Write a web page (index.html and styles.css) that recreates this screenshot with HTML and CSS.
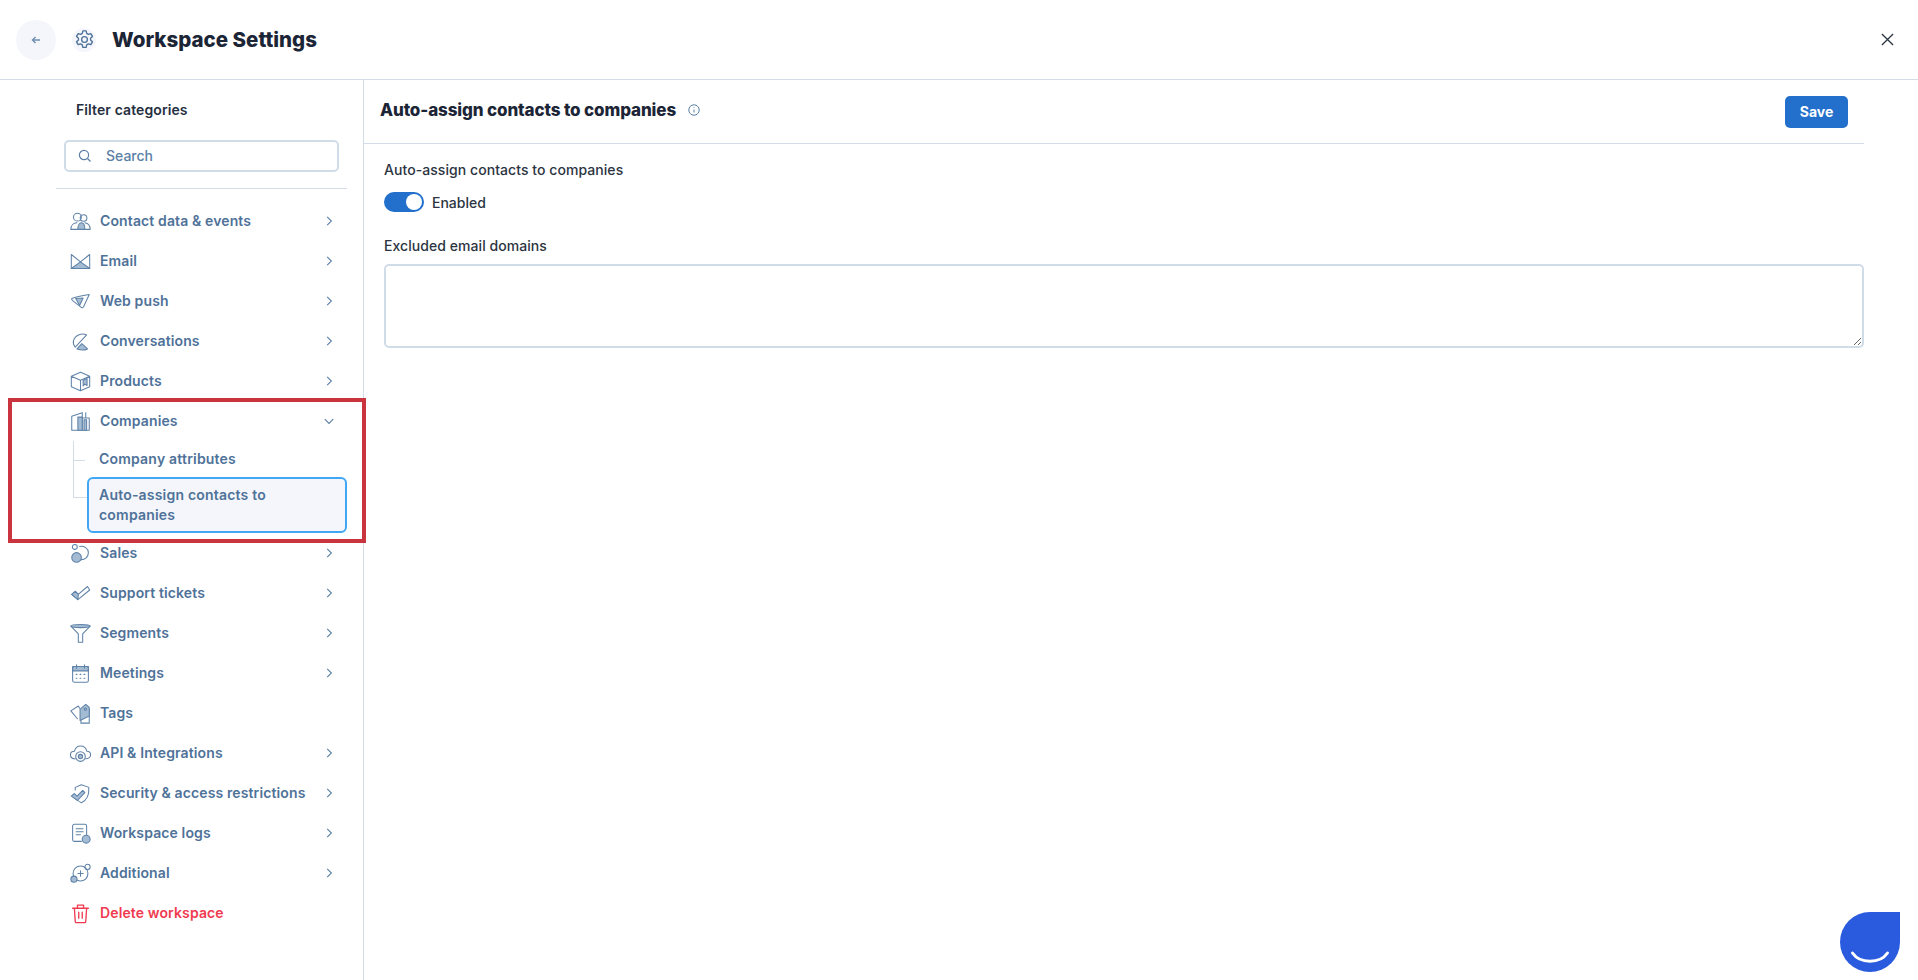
FILE: index.html
```html
<!DOCTYPE html>
<html lang="en">
<head>
<meta charset="utf-8">
<title>Workspace Settings</title>
<link rel="stylesheet" href="styles.css">
</head>
<body>
<header class="topbar">
  <button class="back" aria-label="Back">
    <svg class="back-icon" viewBox="0 0 12 12"><path d="M10 6H2.500M5.500 3 2.500 6l3 3"/></svg>
  </button>
  <span class="gear">
    <svg viewBox="0 0 24 24"><circle cx="12" cy="12" r="3"/><path d="M10.300 3h3.400l.6 2.600 1.700 1 2.600-.8 1.700 3-2 1.800v2l2 1.800-1.700 3-2.600-.8-1.700 1-.6 2.600h-3.400l-.6-2.600-1.700-1-2.600.8-1.700-3 2-1.800v-2l-2-1.800 1.700-3 2.600.8 1.700-1z"/></svg>
  </span>
  <h1 class="page-title">Workspace Settings</h1>
  <svg class="close" viewBox="0 0 14 14"><path d="M1 1l12 12M13 1 1 13"/></svg>
</header>
<div class="layout">
  <aside class="sidebar">
    <div class="filter-title">Filter categories</div>
    <div class="search">
      <svg class="search-icon" viewBox="0 0 14 14"><circle cx="6" cy="6" r="4.600"/><path d="M9.500 9.500l3 3"/></svg>
      <span>Search</span>
    </div>
    <div class="side-rule"></div>
    <nav class="nav">
      <a class="item"><svg class="ic" viewBox="0 0 24 24"><circle cx="8.500" cy="7" r="4.500"/><circle cx="15.500" cy="8" r="3.800"/><path d="M1 21c0-4.500 3-7.500 7-7.500M1 21h22c0-4-2.500-7-6-7.500"/><path class="f" d="M9 21c0-4 1.500-7.500 4-7.500s4 3.500 4 7.500z"/></svg><span class="lbl">Contact data &amp; events</span><svg class="chev" viewBox="0 0 10 10"><path d="M3.500 1.500 7 5 3.500 8.500"/></svg></a>
      <a class="item"><svg class="ic" viewBox="0 0 24 24"><path class="f" d="M1.500 20 12 12.500 22.500 20z"/><path d="M1.500 4v16h21V4M1.500 4 12 12.500 22.500 4"/></svg><span class="lbl">Email</span><svg class="chev" viewBox="0 0 10 10"><path d="M3.500 1.500 7 5 3.500 8.500"/></svg></a>
      <a class="item"><svg class="ic" viewBox="0 0 24 24"><path d="M2 8.500c4-1.500 14-3.500 20-4.500l-6.500 14c-.6 1.300-2 1.500-3 .5L3 11c-1-1-1.300-2-1-2.500z"/><path class="f" d="M6.500 8.500 15 8l-4 8.500z"/></svg><span class="lbl">Web push</span><svg class="chev" viewBox="0 0 10 10"><path d="M3.500 1.500 7 5 3.500 8.500"/></svg></a>
      <a class="item"><svg class="ic" viewBox="0 0 24 24"><path d="M19 4.500C14 2 6 4 4 11c-.7 3 .3 5.500 2 7.500L19 4.500z"/><path class="f" d="M8 20.500 13.500 14.500 20 20.500c-3 1.500-8 1.500-12 0z"/></svg><span class="lbl">Conversations</span><svg class="chev" viewBox="0 0 10 10"><path d="M3.500 1.500 7 5 3.500 8.500"/></svg></a>
      <a class="item"><svg class="ic" viewBox="0 0 24 24"><path d="M12 1.500 22.500 6v12L12 22.500 1.500 18V6zM1.500 6 12 10.500 22.500 6M12 10.500v12"/><path class="f" d="M15 10.500l4.500-2v8L17 15l-2 2z"/></svg><span class="lbl">Products</span><svg class="chev" viewBox="0 0 10 10"><path d="M3.500 1.500 7 5 3.500 8.500"/></svg></a>
      <a class="item"><svg class="ic" viewBox="0 0 24 24"><path d="M2 22V6l12-4v20zM14 8h8v14h-8zM18 8V2M2 22h20"/><path class="f" d="M9 7h5v15H9zM16 10h3v12h-3z"/></svg><span class="lbl">Companies</span><svg class="chev" viewBox="0 0 10 10"><path d="M1.500 3.500 5 7l3.500-3.500"/></svg></a>
      <div class="subtree">
        <div class="tree-line"></div>
        <div class="subitems">
          <a class="sub">Company attributes</a>
          <a class="sub active">Auto-assign contacts to companies</a>
        </div>
      </div>
      <a class="item"><svg class="ic" viewBox="0 0 24 24"><circle cx="5.500" cy="4.500" r="2.800"/><path d="M11 4c5-1 10 2 10 7s-4 8-8 8"/><circle class="f" cx="7.500" cy="16.500" r="5.500"/></svg><span class="lbl">Sales</span><svg class="chev" viewBox="0 0 10 10"><path d="M3.500 1.500 7 5 3.500 8.500"/></svg></a>
      <a class="item"><svg class="ic" viewBox="0 0 24 24"><path d="M2 13 9 19 22.500 8 20 4 9.500 13 6 9.500z"/><path class="f" d="M2 13 6 9.500 9.500 13 9 19z"/></svg><span class="lbl">Support tickets</span><svg class="chev" viewBox="0 0 10 10"><path d="M3.500 1.500 7 5 3.500 8.500"/></svg></a>
      <a class="item"><svg class="ic" viewBox="0 0 24 24"><ellipse class="f" cx="12" cy="3.500" rx="11" ry="1.800"/><path d="M1 3.500 9.500 12.500v9.500h5v-9.500L23 3.500"/></svg><span class="lbl">Segments</span><svg class="chev" viewBox="0 0 10 10"><path d="M3.500 1.500 7 5 3.500 8.500"/></svg></a>
      <a class="item"><svg class="ic" viewBox="0 0 24 24"><path class="f" d="M3 4h18v5H3z"/><rect x="3" y="4" width="18" height="18" rx="2"/><path d="M7.500 2v4M16.500 2v4M7 13h1M11.500 13h1M16 13h1M7 17.500h1M11.500 17.500h1M16 17.500h1"/></svg><span class="lbl">Meetings</span><svg class="chev" viewBox="0 0 10 10"><path d="M3.500 1.500 7 5 3.500 8.500"/></svg></a>
      <a class="item"><svg class="ic" viewBox="0 0 24 24"><path d="M1 9 9.500 3.500 11 6M1 9l7.500 9M12.500 20v3h9.500V7"/><path class="f" d="M11.500 7 18 1.500 22 5v10l-10.500 5z"/><circle cx="17.500" cy="7" r="1.300"/></svg><span class="lbl">Tags</span></a>
      <a class="item"><svg class="ic" viewBox="0 0 24 24"><path d="M6 18C2.500 18 .5 16 .5 13.500c0-2.500 2-4 4.500-4C6 5.500 9 3.500 12 3.500c4 0 6.500 2.500 7.300 6 2.500 0 4.200 1.700 4.200 4 0 2.500-2.500 4.500-5.500 4.500"/><circle cx="12" cy="15.500" r="5.500"/><circle class="f" cx="12" cy="15.500" r="2.500"/></svg><span class="lbl">API &amp; Integrations</span><svg class="chev" viewBox="0 0 10 10"><path d="M3.500 1.500 7 5 3.500 8.500"/></svg></a>
      <a class="item"><svg class="ic" viewBox="0 0 24 24"><path d="M6 8V5l7-3 8.500 3c.5 7-.5 14-8.500 17.500-3-1-5-3-6-5"/><path class="f" d="M1.500 15 5 12l3 3 6.500-6.500 2.500 2.500-8.500 9z"/></svg><span class="lbl">Security &amp; access restrictions</span><svg class="chev" viewBox="0 0 10 10"><path d="M3.500 1.500 7 5 3.500 8.500"/></svg></a>
      <a class="item"><svg class="ic" viewBox="0 0 24 24"><path d="M13 21H5c-1 0-2-1-2-2V3.500c0-1 1-2 2-2h12c1 0 2 1 2 2V14M7 6.500h8M7 10h8M7 13.500h5"/><circle class="f" cx="18.500" cy="18.500" r="4.500"/></svg><span class="lbl">Workspace logs</span><svg class="chev" viewBox="0 0 10 10"><path d="M3.500 1.500 7 5 3.500 8.500"/></svg></a>
      <a class="item"><svg class="ic" viewBox="0 0 24 24"><circle cx="12" cy="12" r="8.500"/><path d="M12 9v6M9 12h6"/><circle cx="20" cy="4.500" r="3"/><circle class="f" cx="4.500" cy="18.500" r="3.500"/></svg><span class="lbl">Additional</span><svg class="chev" viewBox="0 0 10 10"><path d="M3.500 1.500 7 5 3.500 8.500"/></svg></a>
      <a class="item danger"><svg class="ic" viewBox="0 0 24 24"><path d="M3 6h18M8.500 6V2.500h7V6M5 6l1 15c0 .8.700 1.500 1.500 1.500h9c.8 0 1.500-.7 1.500-1.500l1-15M10 10.500v7M14 10.500v7"/></svg><span class="lbl">Delete workspace</span></a>
    </nav>
    <div class="highlight"></div>
  </aside>
  <main class="content">
    <div class="content-head">
      <h2 class="section-title">Auto-assign contacts to companies</h2>
      <svg class="info" viewBox="0 0 14 14"><circle cx="7" cy="7" r="5.200"/><path d="M7 6.500v3M7 4.300v.6"/></svg>
      <button class="save">Save</button>
    </div>
    <div class="form">
      <div class="field-label">Auto-assign contacts to companies</div>
      <div class="toggle-row">
        <span class="toggle"><span class="knob"></span></span>
        <span class="toggle-text">Enabled</span>
      </div>
      <div class="field-label second">Excluded email domains</div>
      <textarea class="domains"></textarea>
    </div>
  </main>
</div>
<div class="widget">
  <svg viewBox="0 0 60 60"><path d="M12.500 41C20 52 40 52 47.500 41"/></svg>
</div>
</body>
</html>
```
FILE: styles.css
```css
* { box-sizing: border-box; }
html, body { margin: 0; height: 100%; overflow: hidden; background: #fff; }
body { font-family: Inter, "Liberation Sans", sans-serif; color: #1f2937; }
svg { display: block; fill: none; }

.topbar { height: 80px; display: flex; align-items: center; padding: 0 16px; border-bottom: 1px solid #d3dde8; }
.back { width: 40px; height: 40px; border-radius: 50%; border: 0; padding: 0; background: #f4f6fb; display: flex; align-items: center; justify-content: center; }
.back-icon { width: 12px; height: 12px; stroke: #6f8fb2; stroke-width: 1.400; }
.gear { width: 24px; height: 24px; margin-left: 16px; border-radius: 50%; background: #f4f6fb; display: flex; align-items: center; justify-content: center; }
.gear svg { width: 23px; height: 23px; stroke: #4f7299; stroke-width: 1.400; stroke-linejoin: round; }
.page-title { margin: 0 0 0 16px; font-size: 20.500px; font-weight: 800; color: #1c2536; letter-spacing: 0; }
.close { width: 13px; height: 13px; margin-left: auto; margin-right: 8px; stroke: #2b3441; stroke-width: 1.400; }

.layout { display: flex; height: calc(100% - 80px); overflow: hidden; }
.sidebar { position: relative; width: 364px; flex: none; border-right: 1px solid #d3dde8; padding-left: 56px; padding-right: 16px; }
.filter-title { margin: 21px 0 0 20px; font-size: 14px; line-height: 18px; font-weight: 600; color: #252f3f; letter-spacing: 0.1px; }
.search { margin: 21px 0 0 8px; width: 275px; height: 32px; display: flex; align-items: center; border: 2px solid #d0dce8; border-radius: 5px; padding: 0 0 1px 12px; font-size: 14px; font-weight: 500; color: #5b7fa6; }
.search-icon { width: 14px; height: 14px; margin-right: 14px; stroke: #5b7fa6; stroke-width: 1.200; }
.side-rule { margin-top: 16px; height: 1px; background: #d3dde8; width: 291px; }

.nav { display: flex; flex-direction: column; margin-top: 12px; }
.item { height: 40px; display: flex; align-items: center; padding-left: 14px; font-size: 14px; font-weight: 600; color: #4f7299; letter-spacing: 0.12px; }
.item .lbl { margin: 0 0 1px 9px; flex: 1; white-space: nowrap; }
.ic { width: 21px; height: 21px; flex: none; stroke: #5f82a8; stroke-width: 1.200; stroke-linejoin: round; stroke-linecap: round; }
.ic .f { fill: #a3bbd3; }
.chev { width: 12px; height: 12px; flex: none; margin-right: 12px; stroke: #5b7fa6; stroke-width: 0.900; }
.danger { color: #ef3a50; }
.danger .ic { stroke: #ef3a50; stroke-width: 1.500; }

.subtree { display: flex; }
.tree-line { width: 17px; height: 57px; margin-left: 17px; flex: none; border-left: 1px solid #d3dde8; background: linear-gradient(#d3dde8, #d3dde8) 0 19px / 11px 1px no-repeat, linear-gradient(#d3dde8, #d3dde8) 0 56px / 14px 1px no-repeat; }
.subitems { flex: 1; min-width: 0; margin-left: -3px; }
.sub { display: block; font-size: 14px; line-height: 20px; font-weight: 600; color: #4f7299; padding: 8px 10px 8px 12px; height: 36px; letter-spacing: 0.2px; }
.sub.active { height: 56px; padding: 6px 10px 8px 10px; background: #f4f6fb; border: 2px solid #41a7f5; border-radius: 6px; }
.highlight { position: absolute; left: 8px; top: 318px; width: 358px; height: 145px; border: 4px solid #c9343f; pointer-events: none; }

.content { flex: 1; min-width: 0; padding-right: 54px; }
.content-head { height: 64px; display: flex; align-items: center; padding: 0 16px; border-bottom: 1px solid #d3dde8; }
.section-title { margin: 0 0 3px; font-size: 17px; font-weight: 800; color: #1c2536; letter-spacing: -0.12px; }
.info { width: 14px; height: 14px; margin: 0 0 3px 11px; stroke: #5b7fa6; stroke-width: 1; }
.save { margin-left: auto; width: 63px; height: 32px; border: 0; border-radius: 5px; background: #2270cc; color: #fff; font: 700 14px Inter, "Liberation Sans", sans-serif; }
.form { padding: 16px 0 0 20px; }
.field-label { font-size: 14px; line-height: 20px; font-weight: 500; color: #2b3441; letter-spacing: 0.06px; }
.field-label.second { margin-top: 24px; }
.toggle-row { display: flex; align-items: center; margin-top: 12px; }
.toggle { width: 40px; height: 20px; border-radius: 10px; background: #2270cc; display: flex; justify-content: flex-end; padding: 2px; }
.knob { width: 16px; height: 16px; border-radius: 50%; background: #fff; }
.toggle-text { margin-left: 8px; font-size: 14px; font-weight: 500; color: #2b3441; }
.domains { display: block; margin-top: 8px; width: 100%; height: 84px; border: 2px solid #d0dce8; border-radius: 5px; resize: vertical; background: #fff; }

.widget { position: absolute; left: 1840px; top: 912px; width: 60px; height: 60px; border-radius: 50% 0 50% 50%; background: #2a5bdf; }
.widget svg { width: 60px; height: 60px; stroke: #fff; stroke-width: 3; stroke-linecap: round; }
```
